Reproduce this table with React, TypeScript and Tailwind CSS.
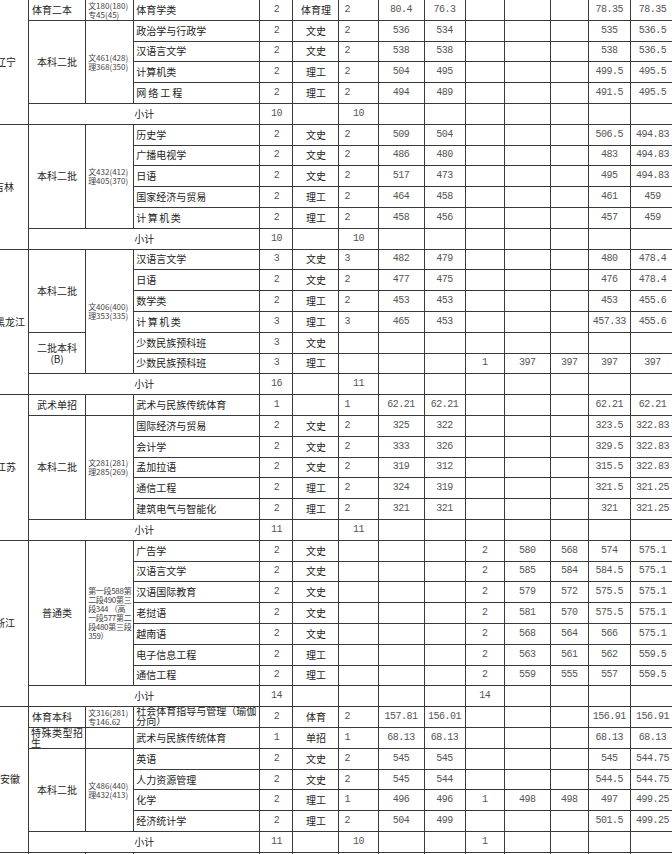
import React from "react";

const B = "border border-[#3a3a3a] p-0 align-middle overflow-hidden whitespace-nowrap";
const CN = "font-['Noto_Sans_CJK_SC',sans-serif] text-[10px] leading-[10px] text-[#222]";
const NUM = "font-['Liberation_Mono','Noto_Sans_CJK_SC',monospace] text-[10px] leading-[10px] tracking-[-0.5px] text-[#555]";
const SM = "font-['Noto_Sans_CJK_SC',sans-serif] text-[8px] leading-[9px] text-[#444] text-left pl-[2px]";

const widths = [42, 57, 48, 126, 33, 46, 39, 46, 41, 39, 46, 38, 42, 44];

function Prov({ t, rs, pl }: { t: string; rs: number; pl: string }) {
  return (
    <td rowSpan={rs} className={`${B} ${CN} text-left ${pl}`}>
      {t}
    </td>
  );
}

function Batch({ t, rs = 1, left = false }: { t: React.ReactNode; rs?: number; left?: boolean }) {
  return (
    <td rowSpan={rs} className={`${B} ${CN} ${left ? "text-left pl-[3px]" : "text-center"}`}>
      {t}
    </td>
  );
}

function Line({ lines, rs = 1, small = false }: { lines: string[]; rs?: number; small?: boolean }) {
  return (
    <td rowSpan={rs} className={`${B} ${SM} ${small ? "text-[7.5px] tracking-[-0.3px]" : ""}`}>
      {lines.map((l, i) => (
        <div key={i}>{l}</div>
      ))}
    </td>
  );
}

function Data({ m, p, k, v }: { m: React.ReactNode; p: string; k: string; v: string[] }) {
  return (
    <>
      <td className={`${B} ${CN} text-left pl-[2px]`}>{m}</td>
      <td className={`${B} ${NUM} text-center`}>{p}</td>
      <td className={`${B} ${CN} text-center`}>{k}</td>
      <td className={`${B} ${NUM} text-left pl-[5px]`}>{v[0]}</td>
      {v.slice(1).map((x, i) => (
        <td key={i} className={`${B} ${NUM} text-center`}>
          {x}
        </td>
      ))}
    </>
  );
}

function Sub({ p, c6, c9 = "" }: { p: string; c6: string; c9?: string }) {
  return (
    <>
      <td colSpan={3} className={`${B} ${CN} text-center`}>
        小计
      </td>
      <td className={`${B} ${NUM} text-center`}>{p}</td>
      <td className={B}></td>
      <td className={`${B} ${NUM} text-center`}>{c6}</td>
      <td className={B}></td>
      <td className={B}></td>
      <td className={`${B} ${NUM} text-center`}>{c9}</td>
      <td className={B}></td>
      <td className={B}></td>
      <td className={B}></td>
      <td className={B}></td>
    </>
  );
}

const R = "h-[20.8px]";

export default function App() {
  return (
    <div className="w-[672px] h-[854px] overflow-hidden bg-white">
      <table className="table-fixed border-collapse -ml-[14px] -mt-[1px] w-[689px]">
        <colgroup>
          {widths.map((w, i) => (
            <col key={i} style={{ width: w }} />
          ))}
        </colgroup>
        <tbody>
          {/* 辽宁 */}
          <tr className={R}>
            <Prov t="辽宁" rs={6} pl="pl-[9px]" />
            <Batch t="体育二本" left />
            <Line lines={["文180(180)", "专45(45)"]} />
            <Data m="体育学类" p="2" k="体育理" v={["2", "80.4", "76.3", "", "", "", "78.35", "78.35"]} />
          </tr>
          <tr className={R}>
            <Batch t="本科二批" rs={4} />
            <Line lines={["文461(428)", "理368(350)"]} rs={4} />
            <Data m="政治学与行政学" p="2" k="文史" v={["2", "536", "534", "", "", "", "535", "536.5"]} />
          </tr>
          <tr className={R}>
            <Data m="汉语言文学" p="2" k="文史" v={["2", "538", "538", "", "", "", "538", "536.5"]} />
          </tr>
          <tr className={R}>
            <Data m="计算机类" p="2" k="理工" v={["2", "504", "495", "", "", "", "499.5", "495.5"]} />
          </tr>
          <tr className={R}>
            <Data m={<span className="tracking-[2px]">网络工程</span>} p="2" k="理工" v={["2", "494", "489", "", "", "", "491.5", "495.5"]} />
          </tr>
          <tr className={R}>
            <Sub p="10" c6="10" />
          </tr>

          {/* 吉林 */}
          <tr className={R}>
            <Prov t="吉林" rs={6} pl="pl-[7px]" />
            <Batch t="本科二批" rs={5} />
            <Line lines={["文432(412)", "理405(370)"]} rs={5} />
            <Data m="历史学" p="2" k="文史" v={["2", "509", "504", "", "", "", "506.5", "494.83"]} />
          </tr>
          <tr className={R}>
            <Data m="广播电视学" p="2" k="文史" v={["2", "486", "480", "", "", "", "483", "494.83"]} />
          </tr>
          <tr className={R}>
            <Data m="日语" p="2" k="文史" v={["2", "517", "473", "", "", "", "495", "494.83"]} />
          </tr>
          <tr className={R}>
            <Data m="国家经济与贸易" p="2" k="理工" v={["2", "464", "458", "", "", "", "461", "459"]} />
          </tr>
          <tr className={R}>
            <Data m={<span className="tracking-[1.5px]">计算机类</span>} p="2" k="理工" v={["2", "458", "456", "", "", "", "457", "459"]} />
          </tr>
          <tr className={R}>
            <Sub p="10" c6="10" />
          </tr>

          {/* 黑龙江 */}
          <tr className={R}>
            <Prov t="黑龙江" rs={7} pl="pl-[8px]" />
            <Batch t="本科二批" rs={4} />
            <Line lines={["文406(400)", "理353(335)"]} rs={6} />
            <Data m="汉语言文学" p="3" k="文史" v={["3", "482", "479", "", "", "", "480", "478.4"]} />
          </tr>
          <tr className={R}>
            <Data m="日语" p="2" k="文史" v={["2", "477", "475", "", "", "", "476", "478.4"]} />
          </tr>
          <tr className={R}>
            <Data m="数学类" p="2" k="理工" v={["2", "453", "453", "", "", "", "453", "455.6"]} />
          </tr>
          <tr className={R}>
            <Data m={<span className="tracking-[1.5px]">计算机类</span>} p="3" k="理工" v={["3", "465", "453", "", "", "", "457.33", "455.6"]} />
          </tr>
          <tr className={R}>
            <Batch
              t={
                <div className="leading-[11px]">
                  <div>二批本科</div>
                  <div>(B)</div>
                </div>
              }
              rs={2}
            />
            <Data m="少数民族预科班" p="3" k="文史" v={["", "", "", "", "", "", "", ""]} />
          </tr>
          <tr className={R}>
            <Data m="少数民族预科班" p="3" k="理工" v={["", "", "", "1", "397", "397", "397", "397"]} />
          </tr>
          <tr className={R}>
            <Sub p="16" c6="11" />
          </tr>

          {/* 江苏 */}
          <tr className={R}>
            <Prov t="江苏" rs={7} pl="pl-[9px]" />
            <Batch t="武术单招" />
            <td className={B}></td>
            <Data m="武术与民族传统体育" p="1" k="" v={["1", "62.21", "62.21", "", "", "", "62.21", "62.21"]} />
          </tr>
          <tr className={R}>
            <Batch t="本科二批" rs={5} />
            <Line lines={["文281(281)", "理285(269)"]} rs={5} />
            <Data m="国际经济与贸易" p="2" k="文史" v={["2", "325", "322", "", "", "", "323.5", "322.83"]} />
          </tr>
          <tr className={R}>
            <Data m="会计学" p="2" k="文史" v={["2", "333", "326", "", "", "", "329.5", "322.83"]} />
          </tr>
          <tr className={R}>
            <Data m="孟加拉语" p="2" k="文史" v={["2", "319", "312", "", "", "", "315.5", "322.83"]} />
          </tr>
          <tr className={R}>
            <Data m="通信工程" p="2" k="理工" v={["2", "324", "319", "", "", "", "321.5", "321.25"]} />
          </tr>
          <tr className={R}>
            <Data m="建筑电气与智能化" p="2" k="理工" v={["2", "321", "321", "", "", "", "321", "321.25"]} />
          </tr>
          <tr className={R}>
            <Sub p="11" c6="11" />
          </tr>

          {/* 浙江 */}
          <tr className={R}>
            <Prov t="浙江" rs={8} pl="pl-[8px]" />
            <Batch t="普通类" rs={7} />
            <Line small lines={["第一段588第", "二段490第三", "段344 （高", "一段577第二", "段480第三段", "359）"]} rs={7} />
            <Data m="广告学" p="2" k="文史" v={["", "", "", "2", "580", "568", "574", "575.1"]} />
          </tr>
          <tr className={R}>
            <Data m="汉语言文学" p="2" k="文史" v={["", "", "", "2", "585", "584", "584.5", "575.1"]} />
          </tr>
          <tr className={R}>
            <Data m="汉语国际教育" p="2" k="文史" v={["", "", "", "2", "579", "572", "575.5", "575.1"]} />
          </tr>
          <tr className={R}>
            <Data m="老挝语" p="2" k="文史" v={["", "", "", "2", "581", "570", "575.5", "575.1"]} />
          </tr>
          <tr className={R}>
            <Data m="越南语" p="2" k="文史" v={["", "", "", "2", "568", "564", "566", "575.1"]} />
          </tr>
          <tr className={R}>
            <Data m="电子信息工程" p="2" k="理工" v={["", "", "", "2", "563", "561", "562", "559.5"]} />
          </tr>
          <tr className={R}>
            <Data m="通信工程" p="2" k="理工" v={["", "", "", "2", "559", "555", "557", "559.5"]} />
          </tr>
          <tr className={R}>
            <Sub p="14" c6="" c9="14" />
          </tr>

          {/* 安徽 */}
          <tr className={R}>
            <Prov t="安徽" rs={7} pl="pl-[13px]" />
            <Batch t="体育本科" left />
            <Line lines={["文316(281)", "专146.62"]} />
            <Data
              m={
                <div className="whitespace-normal leading-[10px] -mt-[2px]">
                  <div>社会体育指导与管理（瑜伽</div>
                  <div>分向）</div>
                </div>
              }
              p="2"
              k="体育"
              v={["2", "157.81", "156.01", "", "", "", "156.91", "156.91"]}
            />
          </tr>
          <tr className={R}>
            <td className={`${B} ${CN} text-left pl-[2px] align-top`}>
              <div className="leading-[10px] tracking-[0.5px]">
                <div>特殊类型招</div>
                <div>生</div>
              </div>
            </td>
            <td className={B}></td>
            <Data m="武术与民族传统体育" p="1" k="单招" v={["1", "68.13", "68.13", "", "", "", "68.13", "68.13"]} />
          </tr>
          <tr className={R}>
            <Batch t="本科二批" rs={4} />
            <Line lines={["文486(440)", "理432(413)"]} rs={4} />
            <Data m="英语" p="2" k="文史" v={["2", "545", "545", "", "", "", "545", "544.75"]} />
          </tr>
          <tr className={R}>
            <Data m="人力资源管理" p="2" k="文史" v={["2", "545", "544", "", "", "", "544.5", "544.75"]} />
          </tr>
          <tr className={R}>
            <Data m="化学" p="2" k="理工" v={["1", "496", "496", "1", "498", "498", "497", "499.25"]} />
          </tr>
          <tr className={R}>
            <Data m="经济统计学" p="2" k="理工" v={["2", "504", "499", "", "", "", "501.5", "499.25"]} />
          </tr>
          <tr className={R}>
            <Sub p="11" c6="10" c9="1" />
          </tr>
          <tr className={R}>
            {widths.map((_, i) => (
              <td key={i} className={B}></td>
            ))}
          </tr>
        </tbody>
      </table>
    </div>
  );
}
